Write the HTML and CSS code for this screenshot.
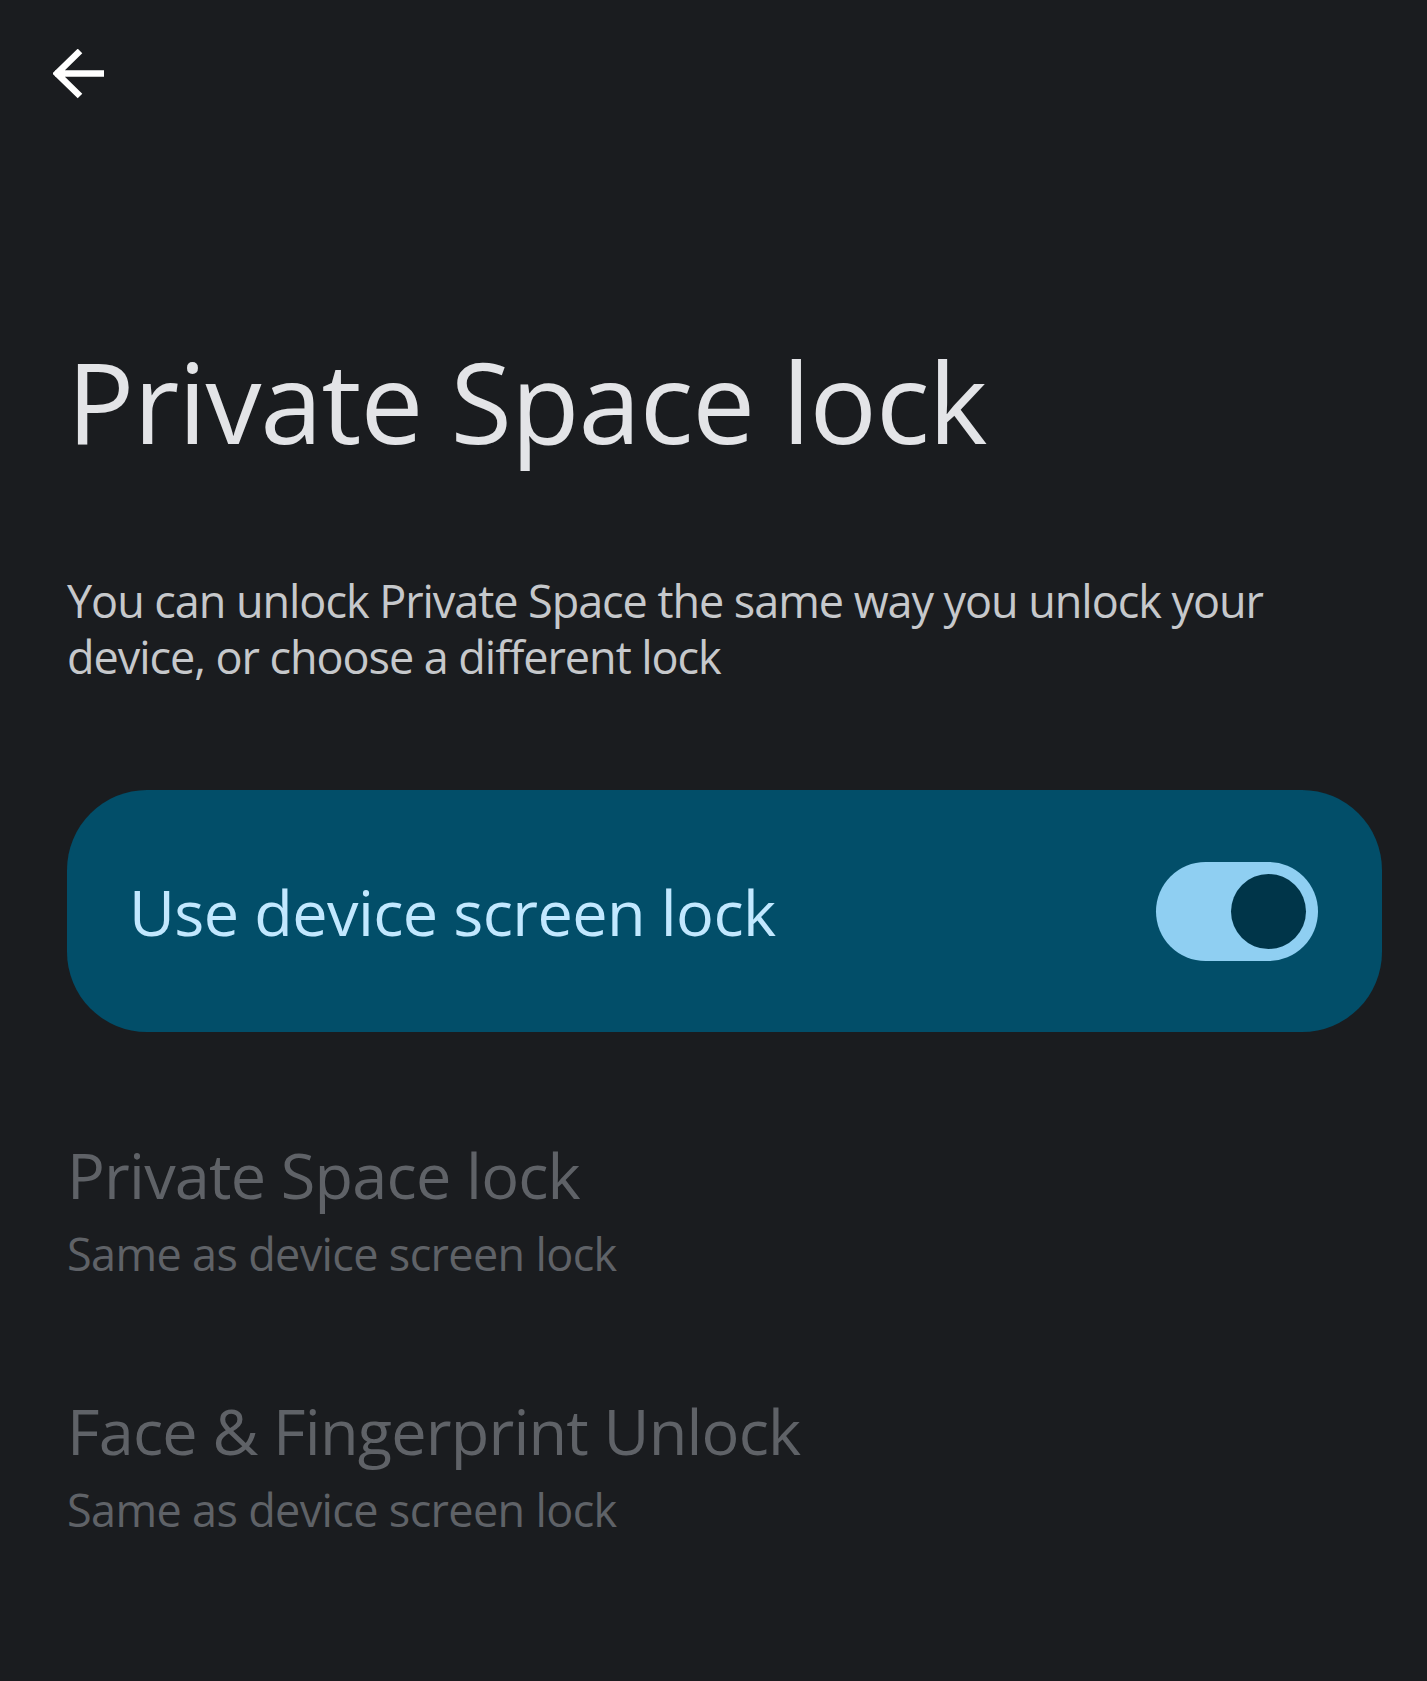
FILE: index.html
```html
<!DOCTYPE html>
<html lang="en">
<head>
    <meta charset="UTF-8">
    <title>Private Space lock</title>
    <link rel="stylesheet" href="styles.css">
</head>
<body>
    <div class="topbar">
        <button class="back" aria-label="Back">
            <svg width="52" height="52" viewBox="0 0 52 52">
                <path d="M2 24.5H51M27 2L4 24.5L27 47" fill="none" stroke="#fff" stroke-width="6.5"/>
            </svg>
        </button>
    </div>

    <div class="page">
        <h1 class="title">Private Space lock</h1>
        <p class="desc">You can unlock Private Space the same way you unlock your device, or choose a different lock</p>

        <div class="main-switch">
            <span class="main-label">Use device screen lock</span>
            <div class="toggle on"><div class="thumb"></div></div>
        </div>

        <div class="pref disabled first">
            <div class="pref-title">Private Space lock</div>
            <div class="pref-sub">Same as device screen lock</div>
        </div>
        <div class="pref disabled">
            <div class="pref-title">Face &amp; Fingerprint Unlock</div>
            <div class="pref-sub">Same as device screen lock</div>
        </div>
    </div>
</body>
</html>
```

FILE: styles.css
```css
:root {
    --bg: #1a1c1f;
    --title: #e3e4e7;
    --desc: #c6c8cb;
    --card: #024e69;
    --card-text: #c2e8ff;
    --track: #8fcff2;
    --thumb: #003549;
    --muted: #5f6267;
}
body {
    margin: 0;
    background: var(--bg);
    font-family: "Open Sans", "Noto Sans", sans-serif;
    min-height: 1681px;
}
.topbar {
    padding: 49px 0 0 53px;
    height: 52px;
}
.back {
    background: none;
    border: 0;
    padding: 0;
    width: 52px;
    height: 52px;
    cursor: pointer;
}
.back svg {
    display: block;
}
.page {
    padding: 0 45px 0 67px;
}
.title {
    margin: 233px 0 0 0;
    font-size: 112px;
    line-height: 134px;
    font-weight: 400;
    color: var(--title);
    letter-spacing: -1px;
}
.desc {
    margin: 105px 0 0 0;
    font-size: 45px;
    line-height: 56px;
    color: var(--desc);
    letter-spacing: -1.05px;
    max-width: 1260px;
}
.main-switch {
    margin-top: 105px;
    height: 242px;
    width: 1315px;
    box-sizing: border-box;
    background: var(--card);
    border-radius: 80px;
    display: flex;
    align-items: center;
    justify-content: space-between;
    padding: 0 64px 0 62px;
}
.main-label {
    font-size: 63px;
    color: var(--card-text);
    letter-spacing: -0.6px;
}
.toggle {
    width: 162px;
    height: 99px;
    border-radius: 50px;
    background: var(--track);
    display: flex;
    align-items: center;
    justify-content: flex-end;
    padding: 0 12px;
    box-sizing: border-box;
}
.thumb {
    width: 75px;
    height: 75px;
    border-radius: 50%;
    background: var(--thumb);
}
.pref {
    margin-top: 113px;
}
.pref.first {
    margin-top: 107px;
}
.pref-title {
    font-size: 63px;
    line-height: 72px;
    letter-spacing: -0.8px;
}
.pref-sub {
    margin-top: 15px;
    font-size: 45px;
    line-height: 56px;
    letter-spacing: -0.65px;
}
.pref.disabled {
    color: var(--muted);
}
```
